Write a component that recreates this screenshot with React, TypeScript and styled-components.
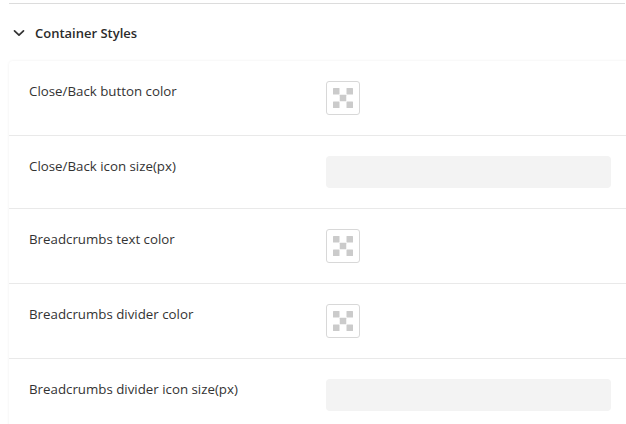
import React from "react";
import styled, { createGlobalStyle } from "styled-components";

const Global = createGlobalStyle`
  html, body { margin: 0; padding: 0; background: #ffffff; }
  body { font-family: "Open Sans", "Noto Sans", Arial, sans-serif; color: #333333; overflow: hidden; }
`;

const Page = styled.div`
  width: 626px;
  height: 424px;
  padding-left: 9px;
  box-sizing: border-box;
  overflow: hidden;
`;

const TopRule = styled.div`
  margin-top: 3px;
  border-top: 1px solid #dcdcdc;
  width: 616px;
`;

const SectionHeader = styled.div`
  height: 57px;
  display: flex;
  align-items: center;
  gap: 10px;
  padding-left: 4px;
  font-size: 13px;
  font-weight: 600;
  color: #2b2b2b;
`;

const Card = styled.div`
  width: 640px;
  background: #ffffff;
  border-radius: 4px;
  box-shadow: 0 0 3px rgba(0, 0, 0, 0.07);
`;

const Row = styled.div`
  display: grid;
  grid-template-columns: 297px 1fr;
  align-items: start;
  padding: 20px 0 20px 20px;
  & + & {
    border-top: 1px solid #e9e9e9;
  }
`;

const Label = styled.div`
  font-size: 13.3px;
  line-height: 20px;
  color: #333333;
`;

const Swatch = styled.div`
  width: 34px;
  height: 34px;
  box-sizing: border-box;
  border: 1px solid #d8d8d8;
  border-radius: 3px;
  display: flex;
  align-items: center;
  justify-content: center;
  background: #fff;
`;

const NumberField = styled.div`
  width: 285px;
  height: 32px;
  border-radius: 4px;
  background: #f3f3f3;
`;

const Checker = () => (
  <svg width="20" height="20" viewBox="0 0 20 20">
    <g fill="#cbcbcb">
      <rect x="0" y="0" width="6.5" height="6.5" rx="0.5" />
      <rect x="13.5" y="0" width="6.5" height="6.5" rx="0.5" />
      <rect x="6.75" y="6.75" width="6.5" height="6.5" rx="0.5" />
      <rect x="0" y="13.5" width="6.5" height="6.5" rx="0.5" />
      <rect x="13.5" y="13.5" width="6.5" height="6.5" rx="0.5" />
    </g>
  </svg>
);

const Chevron = () => (
  <svg width="12" height="12" viewBox="0 0 12 12">
    <path d="M1.5 3.8 L6 8.2 L10.5 3.8" fill="none" stroke="#333" strokeWidth="1.7" strokeLinecap="round" strokeLinejoin="round" />
  </svg>
);

type Item = { label: string; kind: "color" | "number" };

const items: Item[] = [
  { label: "Close/Back button color", kind: "color" },
  { label: "Close/Back icon size(px)", kind: "number" },
  { label: "Breadcrumbs text color", kind: "color" },
  { label: "Breadcrumbs divider color", kind: "color" },
  { label: "Breadcrumbs divider icon size(px)", kind: "number" },
];

export default function App() {
  return (
    <Page>
      <Global />
      <TopRule />
      <SectionHeader>
        <Chevron />
        <span>Container Styles</span>
      </SectionHeader>
      <Card>
        {items.map((it) => (
          <Row key={it.label}>
            <Label>{it.label}</Label>
            {it.kind === "color" ? (
              <Swatch>
                <Checker />
              </Swatch>
            ) : (
              <NumberField />
            )}
          </Row>
        ))}
      </Card>
    </Page>
  );
}
